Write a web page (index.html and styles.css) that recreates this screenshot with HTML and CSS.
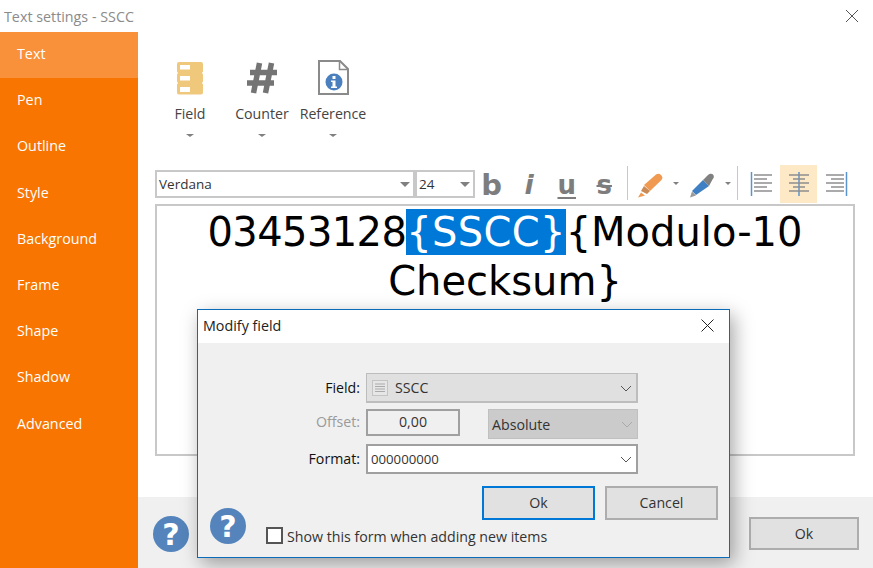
FILE: index.html
```html
<!DOCTYPE html>
<html lang="en">
<head>
<meta charset="utf-8">
<title>Text settings - SSCC</title>
<link rel="stylesheet" href="styles.css">
</head>
<body>
<div class="window">
  <header class="titlebar">
    <span class="title">Text settings - SSCC</span>
    <svg class="close" width="14" height="14" viewBox="0 0 14 14"><path d="M1 1l12 12M13 1L1 13" stroke="#555" stroke-width="1" fill="none"/></svg>
  </header>
  <div class="body">
    <nav class="sidebar">
      <div class="nav active">Text</div>
      <div class="nav">Pen</div>
      <div class="nav">Outline</div>
      <div class="nav">Style</div>
      <div class="nav">Background</div>
      <div class="nav">Frame</div>
      <div class="nav">Shape</div>
      <div class="nav">Shadow</div>
      <div class="nav">Advanced</div>
    </nav>
    <main class="main">
      <div class="content">
        <div class="ribbon">
          <div class="tool tool-field">
            <svg width="26" height="33" viewBox="0 0 26 33"><path d="M2 0h22a2 2 0 0 1 2 2v7.500l-1 1.500 1 1.500v7l-1 1.500 1 1.500v8a2 2 0 0 1-2 2H2a2 2 0 0 1-2-2v-8l1-1.500-1-1.500v-7l1-1.500-1-1.500V2a2 2 0 0 1 2-2z" fill="#efc87c"/><path d="M3 3h10v4.500H3zM3 14h10v4.500H3zM3 25h10v5H3z" fill="#fff"/></svg>
            <span class="tool-label">Field</span>
            <i class="caret"></i>
          </div>
          <div class="tool tool-counter">
            <svg width="30" height="32" viewBox="0 0 30 32"><path d="M12.500 1L6.500 31M24.500 1L18.500 31M3 10.500h27M0 21h27" stroke="#747474" stroke-width="5.500" fill="none"/></svg>
            <span class="tool-label">Counter</span>
            <i class="caret"></i>
          </div>
          <div class="tool tool-ref">
            <svg width="31" height="35" viewBox="0 0 31 35"><path d="M1 1h21l8 8v25H1z" fill="#fff" stroke="#8a8a8a" stroke-width="2"/><path d="M21.500 1.500v8h8" fill="none" stroke="#8a8a8a" stroke-width="1.500"/><circle cx="16" cy="22" r="8.500" fill="#4a80bd"/><rect x="14.500" y="16" width="3" height="3" fill="#fff"/><path d="M13 20.500h4.500v6H19V28h-6v-1.500h1.500v-4.500H13z" fill="#fff"/></svg>
            <span class="tool-label">Reference</span>
            <i class="caret"></i>
          </div>
        </div>
        <div class="toolbar">
          <div class="combo combo-font"><span>Verdana</span><i class="caret caret-lg"></i></div>
          <div class="combo combo-size"><span>24</span><i class="caret caret-lg"></i></div>
          <div class="fmt">
            <span class="fmt-btn fmt-b">b</span>
            <span class="fmt-btn fmt-i">i</span>
            <span class="fmt-btn fmt-u">u</span>
            <span class="fmt-btn fmt-s">s</span>
          </div>
          <span class="sep sep1"></span>
          <svg class="marker" width="28" height="26" viewBox="0 0 28 26"><path d="M1 25.500l3-5 4 3z" fill="#ef9a50"/><path d="M4 19l3-5 6 5-3 3z" fill="#c98a55"/><path d="M7 13L19 2.500c1.500-1 3.500-1 5 .5s2 3 .5 5L13 19z" fill="#ef9a50"/></svg>
          <i class="caret caret-sm"></i>
          <svg class="pen" width="28" height="26" viewBox="0 0 28 26"><path d="M1 25.500l2-6 4 4z" fill="#9a9a9a"/><path d="M3 19L14 8l6 6L7 23z" fill="#3f7fc4"/><path d="M14 8l5-5c2-2 4-1.500 5-.500s1.500 3-.500 5l-3.500 6.500z" fill="#808080"/></svg>
          <i class="caret caret-sm"></i>
          <span class="sep sep2"></span>
          <div class="align-btn">
            <svg width="24" height="24" viewBox="0 0 24 24"><path d="M1.500 0v24" stroke="#5b93cf" stroke-width="1.500"/><path d="M4 3h18M4 7h13M4 11h18M4 15h13M4 19h18" stroke="#8e8e8e" stroke-width="1.500"/></svg>
          </div>
          <div class="align-btn on">
            <svg width="24" height="24" viewBox="0 0 24 24"><path d="M12 0v24" stroke="#5b93cf" stroke-width="1.500"/><path d="M2 3h20M6 7h12M2 11h20M6 15h12M2 19h20" stroke="#8e8e8e" stroke-width="1.500"/></svg>
          </div>
          <div class="align-btn">
            <svg width="24" height="24" viewBox="0 0 24 24"><path d="M22.500 0v24" stroke="#5b93cf" stroke-width="1.500"/><path d="M2 3h18M7 7h13M2 11h18M7 15h13M2 19h18" stroke="#8e8e8e" stroke-width="1.500"/></svg>
          </div>
        </div>
        <div class="editor"><p><span class="digits">03453128</span><span class="sel">{SSCC}</span>{Modulo-10 Checksum}</p></div>
      </div>
      <footer class="footer">
        <svg class="help" width="36" height="36" viewBox="0 0 36 36"><circle cx="18" cy="18" r="18" fill="#5484bb"/><text x="18" y="28.500" text-anchor="middle" class="help-q">?</text></svg>
        <button class="btn btn-main">Ok</button>
      </footer>
    </main>
  </div>

  <section class="dialog">
    <div class="dlg-title">
      <span>Modify field</span>
      <svg width="13" height="13" viewBox="0 0 13 13"><path d="M.5.5l12 12M12.500.5l-12 12" stroke="#222" stroke-width="1" fill="none"/></svg>
    </div>
    <div class="dlg-body">
      <div class="form">
        <label class="lbl">Field:</label>
        <div class="select select-field">
          <svg class="doc" width="16" height="16" viewBox="0 0 16 16"><rect x=".5" y=".5" width="15" height="15" fill="#e6e6e6" stroke="#c4c4c4"/><path d="M3 4h10M3 6.500h10M3 9h10M3 11.500h10" stroke="#aaa"/></svg>
          <span>SSCC</span>
          <svg class="chev" width="12" height="7" viewBox="0 0 12 7"><path d="M1 1l5 5 5-5" stroke="#555" fill="none"/></svg>
        </div>
        <label class="lbl lbl-off">Offset:</label>
        <div class="offset-row">
          <div class="offset">0,00</div>
          <div class="select select-abs">
            <span>Absolute</span>
            <svg class="chev" width="12" height="7" viewBox="0 0 12 7"><path d="M1 1l5 5 5-5" stroke="#aaa" fill="none"/></svg>
          </div>
        </div>
        <label class="lbl">Format:</label>
        <div class="select select-format">
          <span>000000000</span>
          <svg class="chev" width="12" height="7" viewBox="0 0 12 7"><path d="M1 1l5 5 5-5" stroke="#555" fill="none"/></svg>
        </div>
      </div>
      <div class="dlg-actions">
        <button class="btn btn-ok">Ok</button>
        <button class="btn btn-cancel">Cancel</button>
      </div>
      <div class="dlg-foot">
        <svg class="help" width="36" height="36" viewBox="0 0 36 36"><circle cx="18" cy="18" r="18" fill="#5484bb"/><text x="18" y="28.500" text-anchor="middle" class="help-q">?</text></svg>
        <span class="check"></span>
        <span class="check-label">Show this form when adding new items</span>
      </div>
    </div>
  </section>
</div>
</body>
</html>
```
FILE: styles.css
```css
* { box-sizing: border-box; }
html, body { margin: 0; padding: 0; }
body {
  width: 873px;
  height: 568px;
  overflow: hidden;
  font-family: "Open Sans", "Noto Sans", sans-serif;
  font-size: 14.2px;
  color: #333;
  background: #fff;
}
.window { position: relative; width: 873px; height: 568px; display: flex; flex-direction: column; }
.titlebar { height: 32px; display: flex; align-items: center; justify-content: space-between; padding: 0 14px 0 4px; flex: none; }
.title { color: #8b8b8b; font-size: 14.3px; }
.body { flex: 1; display: flex; min-height: 0; }
.sidebar { width: 138px; background: #f77500; flex: none; }
.nav { height: 46.2px; padding: 12px 0 0 17px; color: #fff; font-size: 14.3px; line-height: 19px; }
.nav.active { background: #f9903a; }
.main { flex: 1; display: flex; flex-direction: column; min-width: 0; }
.content { flex: 1; padding: 0 18px 0 17px; }
.ribbon { height: 138px; display: flex; padding-top: 30px; }
.tool { display: flex; flex-direction: column; align-items: center; }
.tool-label { line-height: 18px; font-size: 14.2px; color: #444; }
.tool-field { width: 70px; }
.tool-field svg { margin-bottom: 10px; }
.tool-counter { width: 72px; margin-left: 1px; }
.tool-counter svg { margin-bottom: 11px; }
.tool-ref { width: 72px; margin-left: -1px; margin-top: -2px; }
.tool-ref svg { margin-bottom: 10px; }
.caret { display: block; width: 0; height: 0; border-left: 4px solid transparent; border-right: 4px solid transparent; border-top: 3px solid #808080; margin-top: 11px; }
.toolbar { height: 34px; display: flex; align-items: flex-start; }
.combo { height: 28px; border: 2px solid #c8c8c8; display: flex; align-items: center; justify-content: space-between; font-size: 13.5px; color: #333; background: #fff; padding: 0 3px 0 2px; }
.combo-font { width: 260px; }
.combo-size { width: 60px; }
.caret-lg { margin: 0; border-left-width: 5px; border-right-width: 5px; border-top-width: 5px; }
.caret-sm { margin: 12px 0 0 8px; border-left-width: 3px; border-right-width: 3px; border-top-width: 3px; }
.fmt { display: flex; margin-left: -2px; height: 28px; }
.fmt-btn { width: 37.5px; text-align: center; color: #7d7d7d; font-family: "DejaVu Sans", sans-serif; line-height: 30px; }
.fmt-b { font-weight: 700; font-size: 29px; }
.fmt-i { font-style: italic; font-weight: 700; font-size: 27px; }
.fmt-u { font-size: 26px; font-weight: 700; text-decoration: underline; text-decoration-thickness: 2px; text-underline-offset: 3px; }
.fmt-s { font-size: 26px; font-weight: 700; text-decoration: line-through; text-decoration-thickness: 2px; }
.sep { width: 1px; height: 34px; background: #c8c8c8; margin-top: -4px; }
.sep1 { margin-left: 4px; }
.sep2 { margin-left: 6px; }
.marker { margin: 2px 0 0 9px; }
.pen { margin: 2px 0 0 10px; }
.align-btn { width: 37px; height: 38px; margin-top: -5px; display: flex; align-items: center; justify-content: center; }
.sep2 + .align-btn { margin-left: 5px; }
.align-btn.on { background: #fde9c5; }
.editor { height: 252px; border: 2px solid #c8c8c8; padding-top: 2px; text-align: center; background: #fff; }
.editor p { margin: 0; font-family: "DejaVu Sans", sans-serif; font-size: 40px; line-height: 49px; color: #000; }
.digits { letter-spacing: -.6px; }
.sel { background: #0078d7; color: #fff; letter-spacing: .3px; }
.footer { height: 71px; background: #f0f0f0; flex: none; display: flex; justify-content: space-between; padding: 19px 14px 0 15px; }
.btn { font-family: inherit; font-size: 14.2px; color: #333; background: #e1e1e1; border: 2px solid #adadad; padding: 0; }
.btn-main { width: 110px; height: 33px; margin-top: 1px; }
.help-q { font-family: "DejaVu Sans", sans-serif; font-weight: 700; font-size: 30px; fill: #fff; }
.dialog { position: absolute; left: 197px; top: 309px; width: 533px; height: 249px; background: #f0f0f0; border: 1px solid #0a6cb8; box-shadow: 4px 6px 18px rgba(0, 0, 0, .35); display: flex; flex-direction: column; }
.dlg-title { height: 33px; background: #fff; display: flex; align-items: center; justify-content: space-between; padding: 0 15px 2px 5px; font-size: 14.3px; color: #222; flex: none; }
.dlg-body { flex: 1; display: flex; flex-direction: column; }
.form { display: grid; grid-template-columns: 163px 272px; column-gap: 5px; margin-top: 30px; }
.lbl { text-align: right; color: #111; height: 30px; line-height: 29px; padding-right: 1px; }
.lbl-off { color: #9a9a9a; height: 41px; line-height: 38px; }
.select { display: flex; align-items: center; position: relative; color: #333; padding-left: 4px; }
.chev { position: absolute; right: 4px; top: 50%; margin-top: -3px; }
.select-field { height: 30px; background: #e0e0e0; border: 1px solid #bdbdbd; border-bottom-width: 2px; border-right-width: 2px; padding-left: 5px; }
.doc { margin-right: 7px; }
.offset-row { display: flex; justify-content: space-between; height: 41px; padding-top: 6px; }
.offset { width: 94px; height: 27px; border: 2px solid #a0a0a0; text-align: center; line-height: 22px; color: #333; background: #f0f0f0; }
.select-abs { width: 150px; height: 30px; background: #cbcbcb; border: 1px solid #c0c0c0; padding-left: 3px; }
.select-format { height: 30px; background: #fff; border: 2px solid #a0a0a0; padding-left: 3px; font-size: 13.2px; }
.dlg-actions { display: flex; gap: 10px; margin: 12px 0 0 284px; }
.btn-ok { width: 113px; height: 34px; border-color: #0078d7; padding-bottom: 2px; }
.btn-cancel { width: 113px; height: 34px; padding-bottom: 2px; }
.dlg-foot { display: flex; align-items: center; padding-left: 12px; margin-top: -15px; }
.check { width: 17px; height: 17px; border: 2px solid #555; background: #fff; margin: 20px 4px 0 20px; }
.check-label { margin-top: 22px; color: #333; }
```
